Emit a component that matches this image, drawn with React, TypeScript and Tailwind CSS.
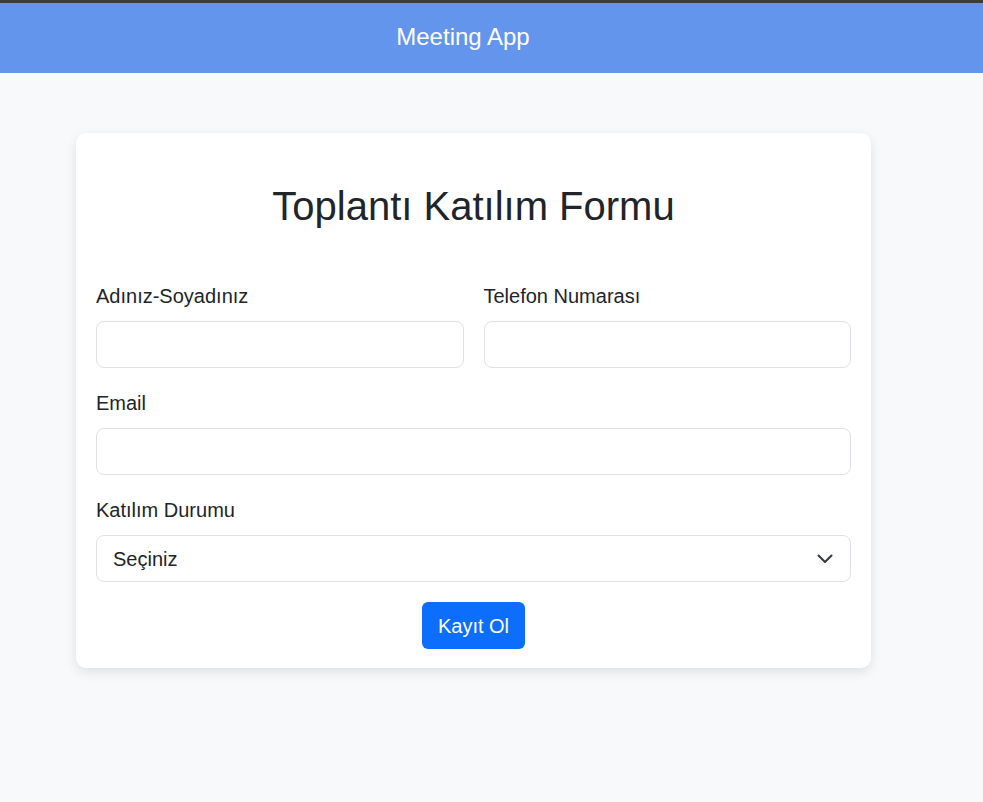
import React from "react";

export default function App() {
  return (
    <div className="min-h-screen bg-[#f8f9fa] text-[#212529] [font-family:'Liberation_Sans',Arial,sans-serif]">
      <div className="h-[3px] bg-[#3c3c3c]" />
      <header className="h-[70px] bg-[#6495ed] flex items-center justify-center pr-[57px] pb-[3px]">
        <span className="text-white text-[24px] leading-[29px]">Meeting App</span>
      </header>
      <main className="pt-[60px]">
        <div className="ml-[76px] w-[795px] bg-white rounded-[10px] shadow-[0_4px_12px_rgba(0,0,0,0.1)] px-5 pt-5 pb-[19px]">
          <h1 className="mt-[29px] text-[40px] leading-[48px] text-center">Toplantı Katılım Formu</h1>
          <div className="mt-[49px] grid grid-cols-2 gap-x-5">
            <div className="flex flex-col">
              <label className="text-[20px] leading-[30px] mt-[2px] mb-[10px]">Adınız-Soyadınız</label>
              <input className="h-[47px] border border-[#dee2e6] rounded-lg px-4 outline-none" />
            </div>
            <div className="flex flex-col">
              <label className="text-[20px] leading-[30px] mt-[2px] mb-[10px]">Telefon Numarası</label>
              <input className="h-[47px] border border-[#dee2e6] rounded-lg px-4 outline-none" />
            </div>
          </div>
          <div className="mt-[18px] flex flex-col">
            <label className="text-[20px] leading-[30px] mt-[2px] mb-[10px]">Email</label>
            <input className="h-[47px] border border-[#dee2e6] rounded-lg px-4 outline-none" />
          </div>
          <div className="mt-[18px] flex flex-col">
            <label className="text-[20px] leading-[30px] mt-[2px] mb-[10px]">Katılım Durumu</label>
            <div className="relative h-[47px] border border-[#dee2e6] rounded-lg flex items-center pl-4">
              <span className="text-[20px] leading-[30px]">Seçiniz</span>
              <svg
                className="absolute right-[17px] top-1/2 -translate-y-1/2"
                width="16"
                height="10"
                viewBox="0 0 16 10"
                fill="none"
                stroke="#343a40"
                strokeWidth="2"
                strokeLinecap="round"
                strokeLinejoin="round"
              >
                <path d="M1.5 1.5 8 8l6.5-6.5" />
              </svg>
            </div>
          </div>
          <div className="mt-5 flex justify-center">
            <button className="h-[47px] px-4 bg-[#0d6efd] text-white text-[20px] leading-[30px] rounded-md">
              Kayıt Ol
            </button>
          </div>
        </div>
      </main>
    </div>
  );
}
